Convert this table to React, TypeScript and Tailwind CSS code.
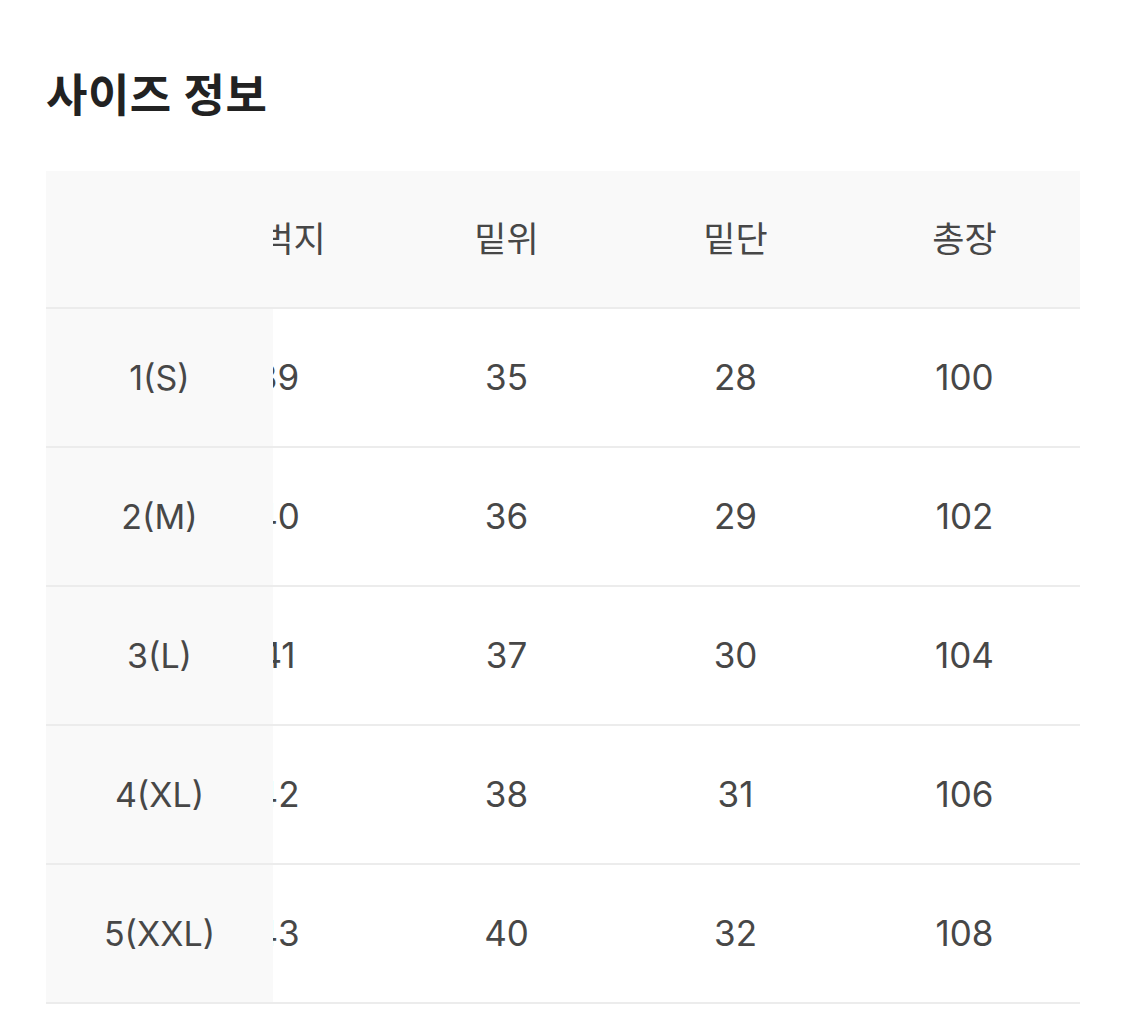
import React from "react";

const cols = ["허벅지", "밑위", "밑단", "총장"];
const rows: { label: string; vals: string[] }[] = [
  { label: "1(S)", vals: ["39", "35", "28", "100"] },
  { label: "2(M)", vals: ["40", "36", "29", "102"] },
  { label: "3(L)", vals: ["41", "37", "30", "104"] },
  { label: "4(XL)", vals: ["42", "38", "31", "106"] },
  { label: "5(XXL)", vals: ["43", "40", "32", "108"] },
];

const font = { fontFamily: 'Inter, "Noto Sans CJK KR", sans-serif' };

export default function App() {
  return (
    <div className="min-h-[1024px] w-[1125px] bg-white" style={font}>
      <div className="px-[46px] pt-[70px]">
        <h2 className="text-[45px] font-semibold leading-[52px] text-[#222] tracking-[0.5px]">
          사이즈 정보
        </h2>
        <div className="mt-[49px] w-[1034px]">
          {/* header */}
          <div className="flex h-[138px] border-b-2 border-[#ececec] bg-[#f9f9f9]">
            <div className="w-[227px] shrink-0" />
            <div className="flex-1 overflow-hidden">
              <div className="ml-[-110px] flex h-full">
                {cols.map((c) => (
                  <div
                    key={c}
                    className="flex w-[229px] shrink-0 items-center justify-center text-[35px] text-[#474747]"
                  >
                    {c}
                  </div>
                ))}
              </div>
            </div>
          </div>
          {rows.map((r) => (
            <div key={r.label} className="flex h-[139px] border-b-2 border-[#ececec]">
              <div className="flex w-[227px] shrink-0 items-center justify-center bg-[#f9f9f9] text-[34px] text-[#474747]">
                {r.label}
              </div>
              <div className="flex-1 overflow-hidden">
                <div className="ml-[-110px] flex h-full">
                  {r.vals.map((v, i) => (
                    <div
                      key={i}
                      className="flex w-[229px] shrink-0 items-center justify-center text-[35px] text-[#474747]"
                    >
                      {v}
                    </div>
                  ))}
                </div>
              </div>
            </div>
          ))}
        </div>
      </div>
    </div>
  );
}
